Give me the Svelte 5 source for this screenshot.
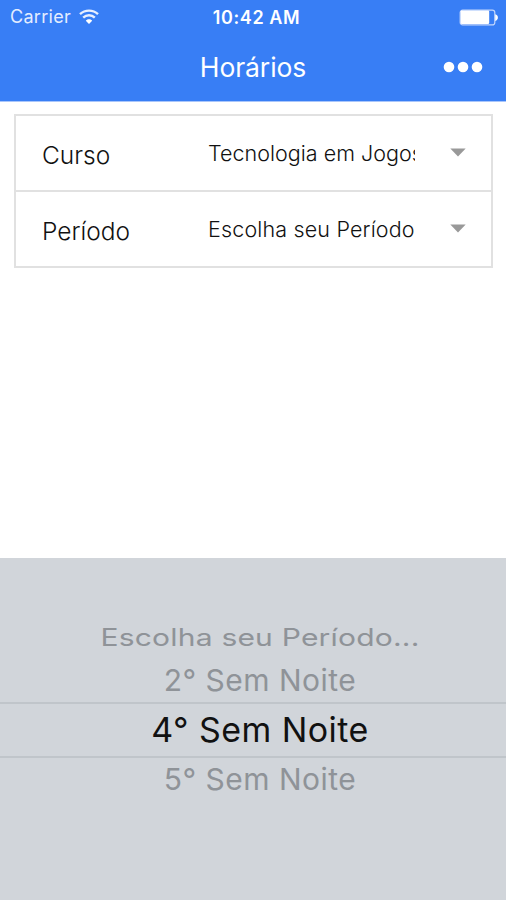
<script lang="ts">
  const fields = [
    { label: "Curso", value: "Tecnologia em Jogos", kind: "course" },
    { label: "Período", value: "Escolha seu Período", kind: "term" },
  ];

  const options = [
    { text: "Escolha seu Período...", kind: "far" },
    { text: "2° Sem Noite", kind: "above" },
    { text: "4° Sem Noite", kind: "selected" },
    { text: "5° Sem Noite", kind: "below" },
  ];
</script>

<div class="screen">
  <header>
    <div class="status">
      <div class="carrier">
        <span>Carrier</span>
        <svg width="20" height="15" viewBox="0 0 20 15" fill="none" stroke="#e8efff" stroke-width="2.4">
          <path d="M1 5.2C6 .4 14 .4 19 5.2" />
          <path d="M4.2 8.7c3.3-3.2 8.3-3.2 11.6 0" />
          <path d="M10 15 6.8 11.8c.8-2.2 5.6-2.2 6.4 0z" fill="#fff" stroke="none" />
        </svg>
      </div>
      <strong>10:42 AM</strong>
      <svg class="battery" width="40" height="17" viewBox="0 0 40 17">
        <rect x="1.2" y="1.1" width="34.6" height="14.8" rx="2.5" fill="none" stroke="#c3d6fc" stroke-width="1.2" />
        <rect x="1.6" y="1.6" width="28.6" height="13.4" rx="1.2" fill="#fff" />
        <path d="M36.2 5.2c3.6 1.1 3.6 5.6 0 6.7z" fill="#fff" />
      </svg>
    </div>
    <nav>
      <h1>Horários</h1>
      <button aria-label="Menu">
        <svg width="40" height="12" viewBox="0 0 40 12" fill="#fff">
          <circle cx="6" cy="6" r="5.3" />
          <circle cx="20" cy="6" r="5.3" />
          <circle cx="34" cy="6" r="5.3" />
        </svg>
      </button>
    </nav>
  </header>

  <main>
    <div class="list">
      {#each fields as field}
        <div class="item">
          <span class="label">{field.label}</span>
          <span class={`value ${field.kind}`}>{field.value}</span>
          <svg width="16" height="9" viewBox="0 0 16 9"><path d="M.3.4h15.4L8 8.5z" fill="#999" /></svg>
        </div>
      {/each}
    </div>
  </main>

  <div class="picker">
    {#each options as option}
      <div class={`option ${option.kind}`}><span>{option.text}</span></div>
    {/each}
  </div>
</div>

<style>
  .screen { width: 506px; height: 900px; display: flex; flex-direction: column; background: #fff; color: #111; font-family: Inter, "Liberation Sans", sans-serif; overflow: hidden; }
  header { height: 101px; flex: none; background: #387ef5; border-bottom: 1px solid #a9c6fb; color: #fff; }
  .status { height: 34px; display: grid; grid-template-columns: 1fr auto 1fr; align-items: center; padding: 0 7px 0 10px; }
  .carrier { display: flex; align-items: center; gap: 8px; color: #e4edff; font-size: 18px; line-height: 20px; letter-spacing: .3px; }
  .carrier svg { margin-top: -2px; }
  .status strong { padding-left: 4px; font-size: 18px; font-weight: 600; letter-spacing: .6px; }
  .battery { justify-self: end; }
  nav { height: 67px; display: grid; grid-template-columns: 1fr auto 1fr; align-items: center; box-sizing: border-box; padding: 0 23px 1px; }
  h1 { grid-column: 2; margin: 0; font-size: 26.5px; font-weight: 400; line-height: 32px; letter-spacing: -.1px; }
  button { justify-self: end; display: flex; padding: 0; border: 0; background: none; }
  main { flex: 1; padding: 12px 13px 0 14px; }
  .list { border: 2px solid #e1e1e1; }
  .item { height: 74px; display: flex; align-items: center; padding: 0 26px; }
  .item + .item { border-top: 2px solid #e1e1e1; }
  .label { width: 166px; padding-top: 4px; font-size: 24.5px; font-weight: 300; }
  .value { width: 207px; margin-top: -1px; font-size: 21.5px; font-weight: 300; overflow: hidden; white-space: nowrap; }
  .course { letter-spacing: .02px; }
  .term { letter-spacing: .16px; }
  .item svg { margin: -2px -1px 0 auto; }
  .picker { height: 342px; flex: none; box-sizing: border-box; padding-top: 60px; background: #d1d5da; text-align: center; }
  .option { display: flex; align-items: center; justify-content: center; box-sizing: border-box; padding-left: 14px; color: #8f9398; font-size: 30px; letter-spacing: .5px; white-space: nowrap; }
  .far { height: 38px; letter-spacing: .2px; }
  .far span { transform: scaleY(.8); }
  .above { height: 46px; padding-top: 1px; }
  .selected { height: 56px; padding-bottom: 1px; border-top: 2px solid #c0c5ca; border-bottom: 2px solid #c0c5ca; color: #111; font-size: 34px; letter-spacing: .45px; }
  .below { height: 42px; }
</style>
